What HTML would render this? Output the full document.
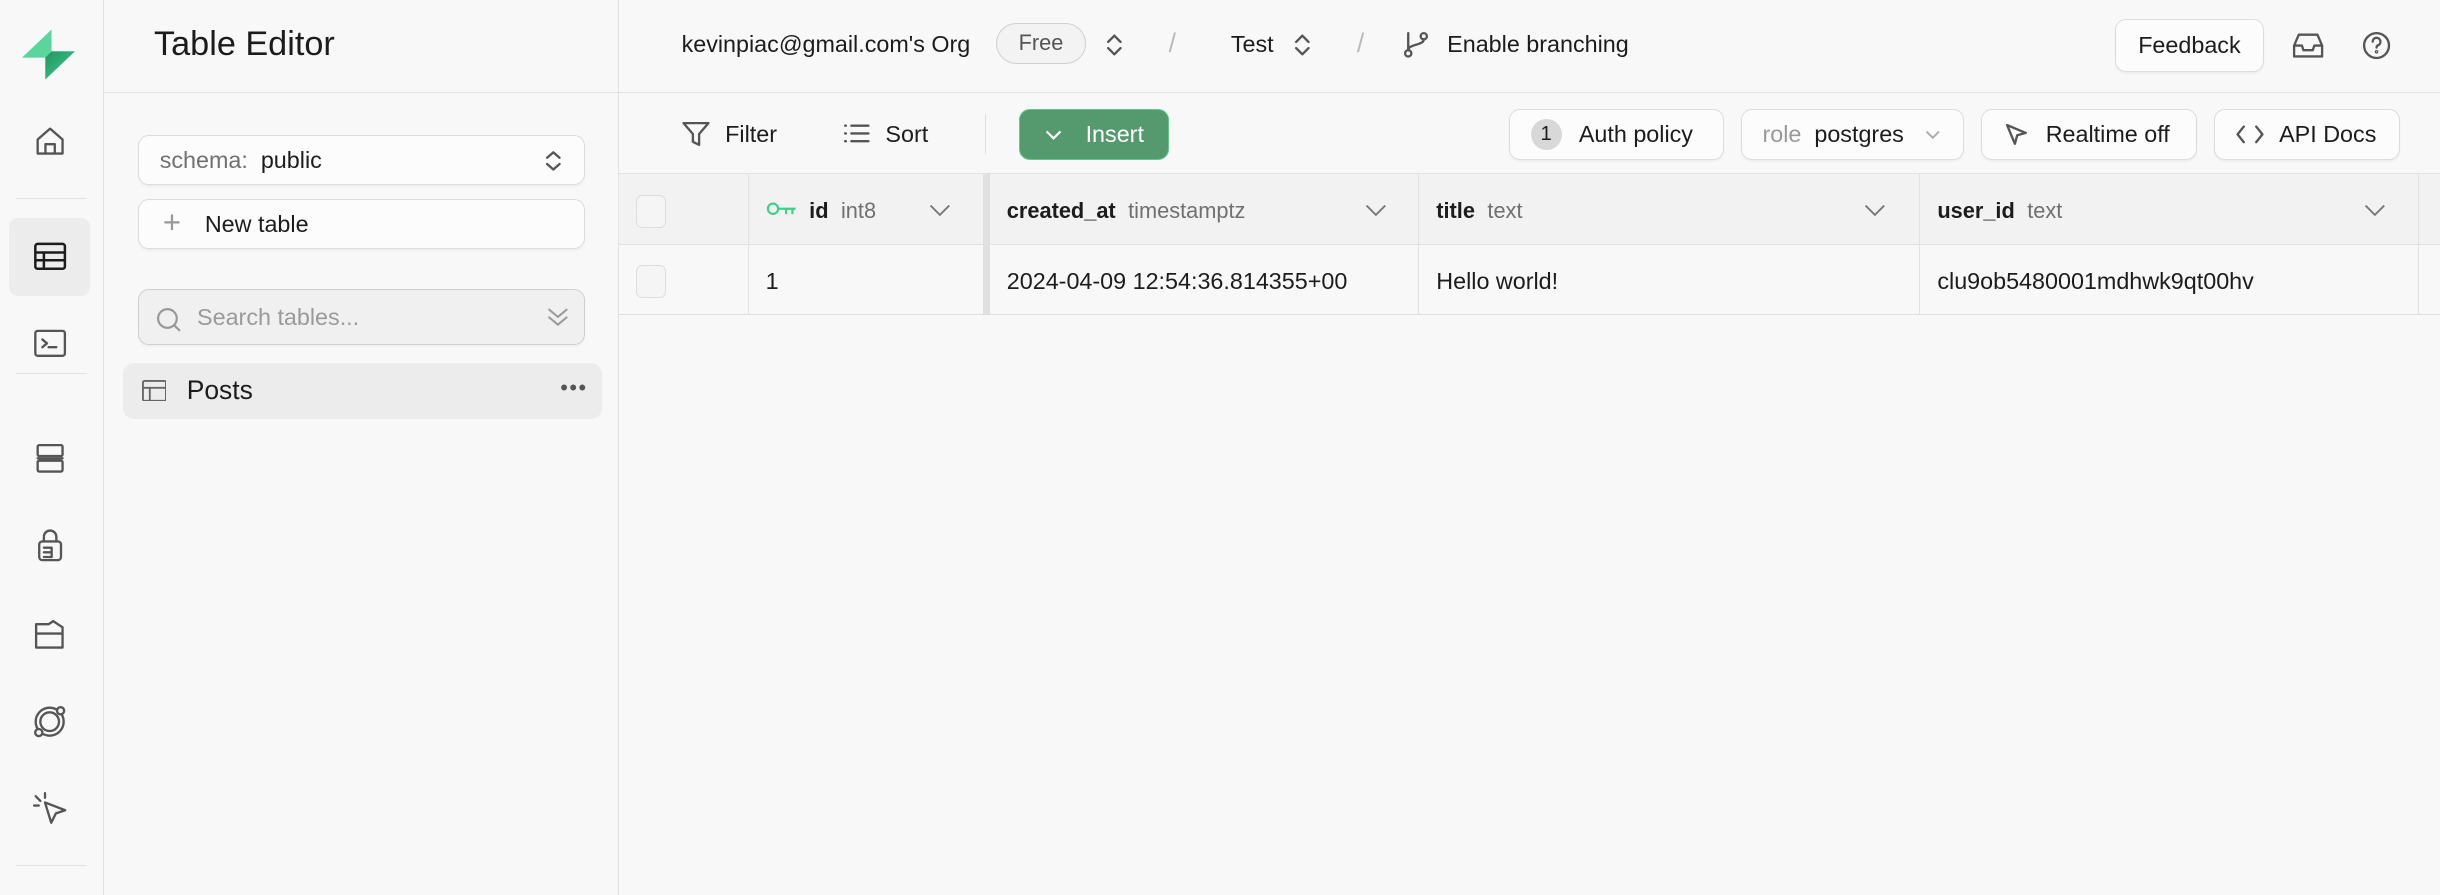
<!DOCTYPE html>
<html><head><meta charset="utf-8"><style>
html,body{margin:0;padding:0;}
body{width:1568px;height:575px;zoom:1.5561;overflow:hidden;background:#f8f8f8;font-family:"Liberation Sans",sans-serif;color:#1c1c1c;position:relative;}
.a{position:absolute;}
.ic{stroke:#555;fill:none;stroke-width:1.5;stroke-linecap:round;stroke-linejoin:round}
.btn{position:absolute;border:1px solid #dcdcdc;border-radius:7px;background:#fcfcfc;font-size:15px;display:flex;align-items:center;box-sizing:border-box;box-shadow:0 1px 1px rgba(0,0,0,.04)}
.hd{font-size:14px;font-weight:bold;color:#1c1c1c}
.ty{font-weight:normal;color:#707070;margin-left:8px}
.cell{position:absolute;font-size:15px;}
</style></head><body>
<!-- rail -->
<div class="a" style="left:0;top:0;width:67px;height:575px;border-right:1px solid #e2e2e2;box-sizing:border-box"></div>
<svg class="a" style="left:14px;top:18px" width="34" height="34" viewBox="0 0 34 34"><defs><linearGradient id="g" x1="0" y1="0" x2="1" y2="1"><stop offset="0" stop-color="#249361"/><stop offset="1" stop-color="#3ecf8e"/></linearGradient></defs><path d="M19 1 L19 15 L34 15 L15 33 L15 19 L0 19 Z" fill="#3ecf8e" opacity=".85"/><path d="M19 15 L34 15 L15 33 L15 19Z" fill="url(#g)"/></svg>
<svg class="a ic" style="left:21px;top:80px" width="22" height="22" viewBox="0 0 22 22"><path d="M3 10 L11 3 L19 10 V19 H3 Z M8 19 V13 H14 V19"/></svg>
<div class="a" style="left:10px;top:127px;width:46px;border-top:1px solid #e2e2e2"></div>
<div class="a" style="left:6px;top:140px;width:52px;height:50px;background:#ececec;border-radius:6px"></div>
<svg class="a" style="left:21px;top:154px" width="22" height="22" viewBox="0 0 22 22" fill="none" stroke="#1c1c1c" stroke-width="1.6"><rect x="1.5" y="2.5" width="19" height="16" rx="1.5"/><path d="M1.5 8 H20.5 M1.5 13 H20.5 M7 8 V18.5"/></svg>
<svg class="a ic" style="left:21px;top:210px" width="22" height="22" viewBox="0 0 22 22"><rect x="1.5" y="2.5" width="19" height="16" rx="1.5"/><path d="M6 8 L9 10.5 L6 13 M10 13 H15"/></svg>
<div class="a" style="left:10px;top:240px;width:46px;border-top:1px solid #e2e2e2"></div>
<svg class="a ic" style="left:21px;top:284px" width="22" height="22" viewBox="0 0 22 22"><rect x="3" y="2" width="16" height="7" rx="1"/><rect x="3" y="12" width="16" height="7" rx="1"/><path d="M3 10.5H19"/></svg>
<svg class="a ic" style="left:21px;top:340px" width="22" height="22" viewBox="0 0 22 22"><path d="M7 8 V5 a4 4 0 0 1 8 0 V8"/><rect x="4" y="8" width="14" height="12" rx="2"/><path d="M7 12H12 M7 15H12 M7 18H12 M12 12V18"/></svg>
<svg class="a ic" style="left:21px;top:397px" width="22" height="22" viewBox="0 0 22 22"><path d="M2 7 V4 H10 L13 2 L19 6 V19 H2 Z M2 10 H19"/></svg>
<svg class="a ic" style="left:20px;top:452px" width="24" height="24" viewBox="0 0 24 24"><circle cx="12" cy="12" r="9"/><circle cx="12" cy="12" r="6"/><circle cx="19" cy="5" r="2.3" fill="#f8f8f8"/><circle cx="5" cy="19" r="2.3" fill="#f8f8f8"/></svg>
<svg class="a ic" style="left:20px;top:508px" width="24" height="24" viewBox="0 0 24 24"><path d="M9 8 L22 13 L16 15 L13 21 Z M3 4 L6 7 M9 2 V5 M2 10 H5"/></svg>
<div class="a" style="left:10px;top:556px;width:46px;border-top:1px solid #e2e2e2"></div>
<!-- sidebar -->
<div class="a" style="left:67px;top:0;width:331px;height:575px;border-right:1px solid #e2e2e2;box-sizing:border-box"></div>
<div class="a" style="left:67px;top:59px;width:331px;border-top:1px solid #e2e2e2"></div>
<div class="a" style="left:99px;top:16px;font-size:22px">Table Editor</div>
<div class="btn" style="left:89px;top:87px;width:287px;height:32px;padding-left:13px;font-size:15px"><span style="color:#707070">schema:</span>&nbsp;&nbsp;public<svg style="position:absolute;right:14px;top:9px" width="12" height="14" viewBox="0 0 12 14" class="ic"><path d="M2 5 L6 1.5 L10 5 M2 9 L6 12.5 L10 9"/></svg></div>
<div class="btn" style="left:89px;top:128px;width:287px;height:32px;padding-left:42px"><span style="position:absolute;left:15px;top:3px;font-size:20px;color:#999;font-weight:300">+</span>New table</div>
<div class="btn" style="left:89px;top:186px;width:287px;height:36px;padding-left:37px;background:#f0f0f0;border-color:#cfcfcf;color:#9a9a9a"><svg style="position:absolute;left:10px;top:10px" width="18" height="18" viewBox="0 0 18 18" fill="none" stroke="#999" stroke-width="1.4"><circle cx="8" cy="8" r="6"/><path d="M12.5 12.5 L16 16"/></svg>Search tables...<svg style="position:absolute;right:10px;top:10px" width="14" height="14" viewBox="0 0 14 14" fill="none" stroke="#999" stroke-width="1.3"><path d="M1 2 L7 7 L13 2 M1 7 L7 12 L13 7"/></svg></div>
<div class="a" style="left:79px;top:233px;width:308px;height:36px;background:#ececec;border-radius:7px"></div>
<svg class="a" style="left:91px;top:244px" width="16" height="14" viewBox="0 0 16 14" fill="none" stroke="#666" stroke-width="1.2"><rect x=".6" y=".6" width="14.8" height="12.8" rx="1"/><path d="M.6 5H15.4M5 5V13.4"/></svg>
<div class="a" style="left:120px;top:241px;font-size:17px">Posts</div>
<div class="a" style="left:360px;top:241px;font-size:14px;letter-spacing:1px;color:#555">•••</div>
<!-- top bar -->
<div class="a" style="left:398px;top:59px;width:1170px;border-top:1px solid #e2e2e2"></div>
<div class="a" style="left:438px;top:20px;font-size:15px">kevinpiac@gmail.com's Org</div>
<div class="a" style="left:640px;top:15px;width:58px;height:26px;border:1px solid #d0d0d0;border-radius:14px;box-sizing:border-box;font-size:14px;color:#555;text-align:center;line-height:24px;background:#f3f3f3">Free</div>
<svg class="a ic" style="left:710px;top:20px" width="12" height="18" viewBox="0 0 12 18"><path d="M2 7 L6 3 L10 7 M2 11 L6 15 L10 11"/></svg>
<div class="a" style="left:751px;top:18px;font-size:17px;color:#bbb">/</div>
<div class="a" style="left:791px;top:20px;font-size:15px">Test</div>
<svg class="a ic" style="left:831px;top:20px" width="12" height="18" viewBox="0 0 12 18"><path d="M2 7 L6 3 L10 7 M2 11 L6 15 L10 11"/></svg>
<div class="a" style="left:872px;top:18px;font-size:17px;color:#bbb">/</div>
<svg class="a ic" style="left:901px;top:19px" width="18" height="18" viewBox="0 0 18 18"><circle cx="4" cy="15" r="2"/><circle cx="14" cy="4" r="2"/><path d="M4 13 V2 M14 6 C14 10 4 9 4 13"/></svg>
<div class="a" style="left:930px;top:20px;font-size:15px">Enable branching</div>
<div class="btn" style="left:1359px;top:12px;width:96px;height:34px;justify-content:center">Feedback</div>
<svg class="a ic" style="left:1472px;top:19px" width="22" height="20" viewBox="0 0 22 20"><path d="M2 10 L5 3 H17 L20 10 V17 H2 Z M2 10 H7 L8 13 H14 L15 10 H20"/></svg>
<svg class="a ic" style="left:1517px;top:19px" width="20" height="20" viewBox="0 0 20 20"><circle cx="10" cy="10" r="8"/><path d="M7.5 7.5 a2.5 2.5 0 1 1 3.5 2.3 c-.7.3-1 .8-1 1.5"/><circle cx="10" cy="14" r=".4"/></svg>
<!-- toolbar -->
<div class="a" style="left:398px;top:111px;width:1170px;border-top:1px solid #e2e2e2"></div>
<svg class="a ic" style="left:438px;top:77px" width="18" height="18" viewBox="0 0 18 18"><path d="M1 2 H17 L11 9 V16 L7 14 V9 Z"/></svg>
<div class="a" style="left:466px;top:78px;font-size:15px">Filter</div>
<svg class="a ic" style="left:541px;top:78px" width="18" height="16" viewBox="0 0 18 16"><path d="M6 3H17M6 8H17M6 13H17M2 3H2.5M2 8H2.5M2 13H2.5"/></svg>
<div class="a" style="left:569px;top:78px;font-size:15px">Sort</div>
<div class="a" style="left:633px;top:73px;height:26px;border-left:1px solid #ddd"></div>
<div class="a" style="left:655px;top:70px;width:96px;height:33px;background:#559a6f;border:1px solid #5fc88a;border-radius:7px;box-sizing:border-box;color:#fff;font-size:15px;line-height:31px;padding-left:42px"><svg style="position:absolute;left:16px;top:12px" width="11" height="8" viewBox="0 0 11 8" fill="none" stroke="#fff" stroke-width="1.4"><path d="M1 1.5 L5.5 6 L10 1.5"/></svg>Insert</div>
<div class="btn" style="left:970px;top:70px;width:138px;height:33px;padding-left:44px"><span style="position:absolute;left:13px;top:6px;width:20px;height:20px;border-radius:10px;background:#d8d8d8;font-size:13px;text-align:center;line-height:20px">1</span>Auth policy</div>
<div class="btn" style="left:1119px;top:70px;width:143px;height:33px;padding-left:13px"><span style="color:#999">role</span>&nbsp;&nbsp;postgres<svg style="position:absolute;right:14px;top:13px" width="10" height="7" viewBox="0 0 10 7" fill="none" stroke="#aaa" stroke-width="1.2"><path d="M1 1 L5 5 L9 1"/></svg></div>
<div class="btn" style="left:1273px;top:70px;width:139px;height:33px;padding-left:41px"><svg style="position:absolute;left:14px;top:8px" width="16" height="16" viewBox="0 0 16 16" class="ic" stroke-width="1.3"><path d="M2 2 L14 7 L8.5 8.5 L7 14 Z"/></svg>Realtime off</div>
<div class="btn" style="left:1423px;top:70px;width:119px;height:33px;padding-left:41px"><svg style="position:absolute;left:13px;top:10px" width="18" height="12" viewBox="0 0 18 12" class="ic" stroke-width="1.3"><path d="M5 1 L1 6 L5 11 M13 1 L17 6 L13 11"/></svg>API Docs</div>
<!-- grid -->
<div class="a" style="left:398px;top:112px;width:1170px;height:45px;background:#f2f2f2;border-bottom:1px solid #e2e2e2"></div>
<div class="a" style="left:398px;top:202px;width:1170px;border-top:1px solid #dedede"></div>
<div class="a" style="left:481px;top:112px;height:90px;border-left:1px solid #e2e2e2"></div>
<div class="a" style="left:632px;top:112px;width:4px;height:90px;background:#e0e0e0"></div>
<div class="a" style="left:911px;top:112px;height:90px;border-left:1px solid #e2e2e2"></div>
<div class="a" style="left:1233px;top:112px;height:90px;border-left:1px solid #e2e2e2"></div>
<div class="a" style="left:1554px;top:112px;height:90px;border-left:1px solid #e2e2e2"></div>
<div class="a" style="left:409px;top:125px;width:18px;height:20px;border:1px solid #ddd;border-radius:4px;background:#f5f5f5"></div>
<div class="a" style="left:409px;top:170px;width:18px;height:20px;border:1px solid #ddd;border-radius:4px;background:#f5f5f5"></div>
<svg class="a" style="left:492px;top:129px" width="20" height="10" viewBox="0 0 20 10" fill="none" stroke="#3ecf8e" stroke-width="1.4"><circle cx="4.5" cy="5" r="3.3"/><path d="M8 5H19 M13 5V8.5 M17 5V8.5"/></svg>
<div class="a hd" style="left:520px;top:127px">id<span class="ty">int8</span></div>
<div class="a hd" style="left:647px;top:127px">created_at<span class="ty">timestamptz</span></div>
<div class="a hd" style="left:923px;top:127px">title<span class="ty">text</span></div>
<div class="a hd" style="left:1245px;top:127px">user_id<span class="ty">text</span></div>
<svg class="a" style="left:597px;top:131px" width="14" height="8" viewBox="0 0 14 8" fill="none" stroke="#777" stroke-width="1.2"><path d="M1 1 L7 7 L13 1"/></svg>
<svg class="a" style="left:877px;top:131px" width="14" height="8" viewBox="0 0 14 8" fill="none" stroke="#777" stroke-width="1.2"><path d="M1 1 L7 7 L13 1"/></svg>
<svg class="a" style="left:1198px;top:131px" width="14" height="8" viewBox="0 0 14 8" fill="none" stroke="#777" stroke-width="1.2"><path d="M1 1 L7 7 L13 1"/></svg>
<svg class="a" style="left:1519px;top:131px" width="14" height="8" viewBox="0 0 14 8" fill="none" stroke="#777" stroke-width="1.2"><path d="M1 1 L7 7 L13 1"/></svg>
<div class="cell" style="left:492px;top:172px">1</div>
<div class="cell" style="left:647px;top:172px">2024-04-09 12:54:36.814355+00</div>
<div class="cell" style="left:923px;top:172px">Hello world!</div>
<div class="cell" style="left:1245px;top:172px">clu9ob5480001mdhwk9qt00hv</div>
</body></html>
